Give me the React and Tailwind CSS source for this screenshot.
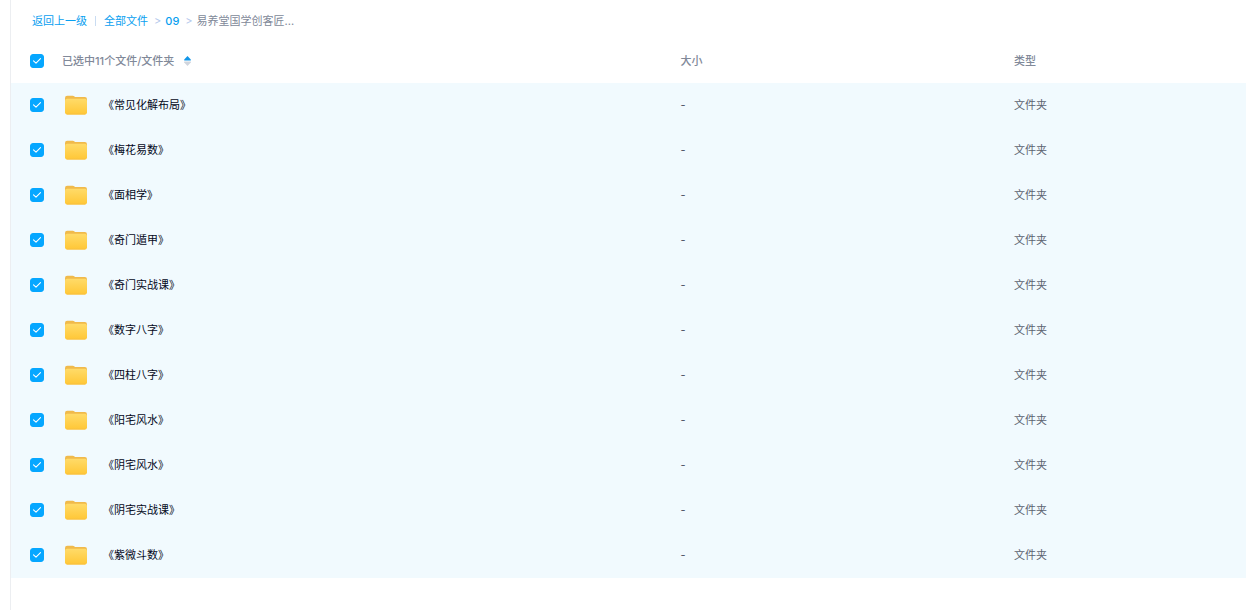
import React, { useState } from "react";

const FOLDERS = [
  "《常见化解布局》",
  "《梅花易数》",
  "《面相学》",
  "《奇门遁甲》",
  "《奇门实战课》",
  "《数字八字》",
  "《四柱八字》",
  "《阳宅风水》",
  "《阴宅风水》",
  "《阴宅实战课》",
  "《紫微斗数》",
];

function Checkbox({ label, checked, onChange }) {
  return (
    <label className="ml-[19px] grid size-3.5 cursor-pointer place-items-center">
      <input
        type="checkbox"
        aria-label={label}
        checked={checked}
        onChange={onChange}
        className="peer col-start-1 row-start-1 size-3.5 appearance-none rounded-[3px] border border-[#c4cdd8] bg-white checked:border-[#06a7ff] checked:bg-[#06a7ff]"
      />
      <svg
        viewBox="0 0 14 14"
        className="pointer-events-none invisible col-start-1 row-start-1 size-3.5 peer-checked:visible"
        fill="none"
        stroke="#fff"
        strokeWidth="1.1"
        strokeLinecap="round"
        strokeLinejoin="round"
        aria-hidden="true"
      >
        <path d="M3.5 6.8 6 9.2l4.5-4.6" />
      </svg>
    </label>
  );
}

function FolderIcon() {
  return (
    <svg viewBox="0 0 22 20" className="h-5 w-[22px] shrink-0" aria-hidden="true">
      <defs>
        <linearGradient id="folder-front" x1="0" y1="0" x2="0" y2="1">
          <stop offset="0" stopColor="#ffdb69" />
          <stop offset="1" stopColor="#ffc736" />
        </linearGradient>
      </defs>
      <path
        d="M0 3Q0 .8 2.2.8h5.6q.8 0 1.4.5l.8.7H19.8q2.2 0 2.2 2.2V12H0z"
        fill="#f0ba4c"
      />
      <rect x="0" y="3.8" width="22" height="15.7" rx="2.2" fill="url(#folder-front)" />
      <path d="M2 19h18" stroke="#f9c040" strokeWidth="1" strokeLinecap="round" />
    </svg>
  );
}

function SortIcon() {
  return (
    <svg viewBox="0 0 7 10" className="h-2.5 w-[7px]" aria-hidden="true">
      <path d="M3.5 0 6.8 3.6v.9H.2v-.9z" fill="#1296e8" />
      <path d="M3.5 10 6.8 6.4v-.9H.2v.9z" fill="#d0d5dd" />
    </svg>
  );
}

function Breadcrumb() {
  return (
    <nav aria-label="路径" className="flex h-[42px] items-center pl-[21px] text-[#09a0f0]">
      <a href="#back">返回上一级</a>
      <span className="ml-2 h-2.5 w-px bg-[#c9dcf2]" />
      <a href="#all" className="ml-2">全部文件</a>
      <span className="ml-1.5 text-[#b5c9ec]">&gt;</span>
      <a href="#09" className="ml-1 font-medium">09</a>
      <span className="ml-1.5 text-[#b5c9ec]">&gt;</span>
      <span className="ml-1 text-[#818999]">易养堂国学创客匠...</span>
    </nav>
  );
}

export default function App() {
  const [selected, setSelected] = useState(() => new Set(FOLDERS));
  const allSelected = selected.size === FOLDERS.length;

  const toggle = (name) =>
    setSelected((prev) => {
      const next = new Set(prev);
      if (next.has(name)) next.delete(name);
      else next.add(name);
      return next;
    });

  return (
    <main className="ml-2.5 min-h-screen border-l border-[#eceef1] bg-white font-['Inter','Noto_Sans_CJK_SC',sans-serif] text-[11px] leading-4">
      <Breadcrumb />
      <table className="w-full table-fixed border-collapse text-left">
        <colgroup>
          <col className="w-[51px]" />
          <col className="w-[50%]" />
          <col className="w-[27%]" />
          <col />
        </colgroup>
        <thead className="text-[#818999]">
          <tr className="h-[41px] align-top">
            <th className="pt-3">
              <Checkbox
                label="全选"
                checked={allSelected}
                onChange={() => setSelected(new Set(allSelected ? [] : FOLDERS))}
              />
            </th>
            <th className="pt-[11px] font-medium">
              <button type="button" className="flex items-center gap-2.5">
                已选中{selected.size}个文件/文件夹
                <SortIcon />
              </button>
            </th>
            <th className="pt-[11px] pl-px font-medium">大小</th>
            <th className="pt-[11px] pl-px font-medium">类型</th>
          </tr>
        </thead>
        <tbody>
          {FOLDERS.map((name) => (
            <tr
              key={name}
              className={selected.has(name) ? "h-[45px] bg-[#f1fafe]" : "h-[45px]"}
            >
              <td className="pb-0.5">
                <Checkbox
                  label={name}
                  checked={selected.has(name)}
                  onChange={() => toggle(name)}
                />
              </td>
              <td className="pb-0.5">
                <div className="flex items-center gap-4 pl-[3px]">
                  <FolderIcon />
                  <a href="#folder" className="text-[#03081a]">{name}</a>
                </div>
              </td>
              <td className="pb-0.5 pl-px text-[#4c5463]">-</td>
              <td className="pb-0.5 pl-px text-[#5c6370]">文件夹</td>
            </tr>
          ))}
        </tbody>
      </table>
    </main>
  );
}
